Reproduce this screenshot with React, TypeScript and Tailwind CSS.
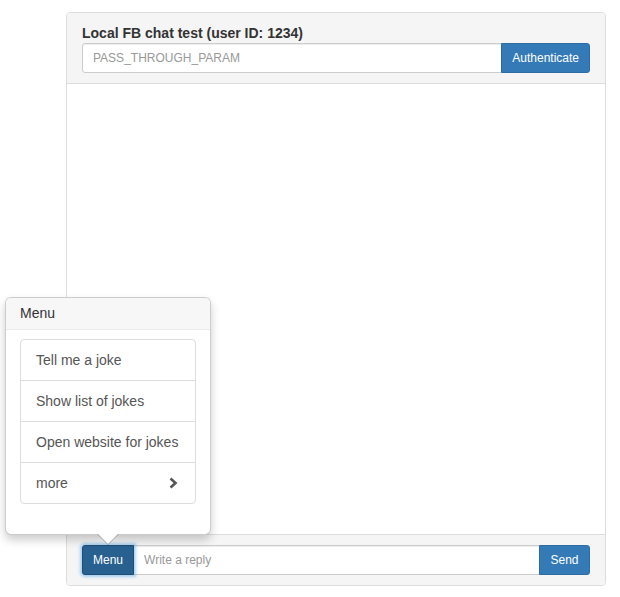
export default function App() {
  const font = "font-['Liberation_Sans',Arial,sans-serif]";
  const item =
    "flex items-center justify-between px-[15px] py-[10px] text-[14px] leading-[20px] text-[#555] border-b border-[#ddd] last:border-b-0";
  return (
    <div className={`${font} pt-[12px] pl-[66px] text-[#333]`}>
      <div className="relative w-[540px] border border-[#ddd] rounded-[4px] bg-white">
        <div className="bg-[#f5f5f5] border-b border-[#ddd] rounded-t-[3px] px-[15px] py-[10px]">
          <h3 className="text-[14px] leading-[20px] font-bold">Local FB chat test (user ID: 1234)</h3>
          <div className="flex h-[30px]">
            <input
              className="flex-1 min-w-0 h-[30px] border border-[#ccc] rounded-l-[3px] px-[10px] text-[12px] bg-white outline-none placeholder:text-[#999] shadow-[inset_0_1px_1px_rgba(0,0,0,0.075)]"
              placeholder="PASS_THROUGH_PARAM"
            />
            <button className="h-[30px] px-[10px] text-[12px] text-white bg-[#337ab7] border border-[#2e6da4] rounded-r-[3px] -ml-px">
              Authenticate
            </button>
          </div>
        </div>

        <div className="h-[450px]" />

        <div className="bg-[#f5f5f5] border-t border-[#ddd] rounded-b-[3px] px-[15px] py-[10px]">
          <div className="flex h-[30px]">
            <button className="relative z-10 h-[30px] px-[10px] text-[12px] text-white bg-[#286090] border border-[#204d74] rounded-l-[3px] shadow-[0_0_3px_2px_rgba(102,175,233,0.55)]">
              Menu
            </button>
            <input
              className="flex-1 min-w-0 h-[30px] border border-[#ccc] -ml-px px-[10px] text-[12px] bg-white outline-none placeholder:text-[#999] shadow-[inset_0_1px_1px_rgba(0,0,0,0.075)]"
              placeholder="Write a reply"
            />
            <button className="h-[30px] w-[51px] text-[12px] text-white bg-[#337ab7] border border-[#2e6da4] rounded-r-[3px] -ml-px">
              Send
            </button>
          </div>
        </div>

        {/* popover above the Menu button */}
        <div className="absolute left-[-62px] top-[284px] w-[206px] bg-white border border-black/20 rounded-[6px] shadow-[0_5px_10px_rgba(0,0,0,0.2)] z-20">
          <div className="bg-[#f7f7f7] border-b border-[#ebebeb] rounded-t-[5px] px-[14px] py-[8px] text-[14px] leading-[15px] text-[#333]">
            Menu
          </div>
          <div className="px-[14px] pt-[9px] pb-[30px]">
            <div className="border border-[#ddd] rounded-[4px]">
              <div className={item}>Tell me a joke</div>
              <div className={item}>Show list of jokes</div>
              <div className={item}>Open website for jokes</div>
              <div className={item}>
                <span>more</span>
                <svg width="9" height="12" viewBox="0 0 9 12" className="mr-[2px]">
                  <path d="M1.5 1.5 L6.5 6 L1.5 10.5" fill="none" stroke="#555" strokeWidth="2.6" strokeLinejoin="miter" />
                </svg>
              </div>
            </div>
          </div>
          <div className="absolute left-[91px] bottom-[-11px] w-0 h-0 border-x-[11px] border-x-transparent border-t-[11px] border-t-black/25" />
          <div className="absolute left-[92px] bottom-[-10px] w-0 h-0 border-x-[10px] border-x-transparent border-t-[10px] border-t-white" />
        </div>
      </div>
    </div>
  );
}
